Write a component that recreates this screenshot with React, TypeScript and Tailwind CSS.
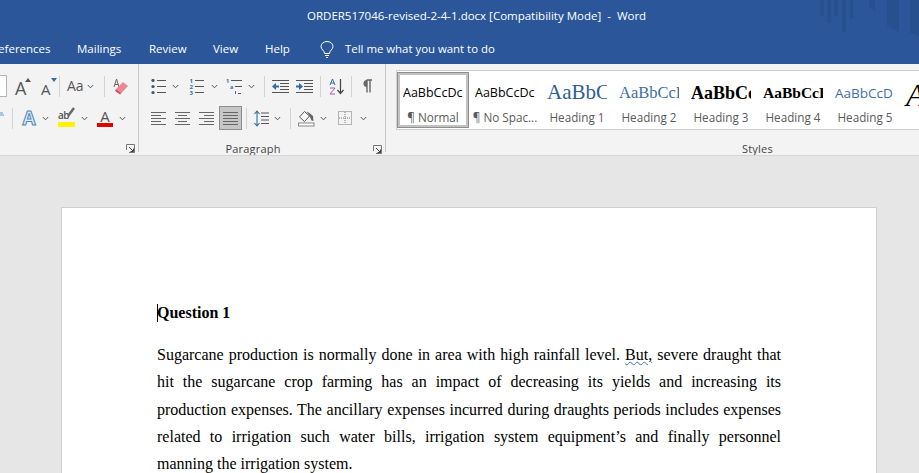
const ui = { fontFamily: '"Open Sans", "Noto Sans", sans-serif' };

const Chevron = ({ className = "" }: { className?: string }) => (
  <svg width="7" height="5" viewBox="0 0 7 5" className={`shrink-0 ${className}`}>
    <path d="M.8 1 3.5 3.8 6.2 1" fill="none" stroke="#555" strokeWidth="1" />
  </svg>
);

const Divider = ({ className = "" }: { className?: string }) => (
  <div className={`w-px h-[21px] bg-[#d2d2d2] shrink-0 ${className}`} />
);

const Launcher = ({ className = "" }: { className?: string }) => (
  <svg width="9" height="9" viewBox="0 0 9 9" className={`shrink-0 ${className}`}>
    <path d="M.5 6V.5H8.500V8.500H3" fill="none" stroke="#777" />
    <path d="M3 3 7.500 7.500M7.500 4.500v3h-3" fill="none" stroke="#444" />
  </svg>
);

const Lines = ({ rows }: { rows: [number, number][] }) => (
  <svg width="16" height="15" viewBox="0 0 16 15" className="shrink-0">
    {rows.map(([x, w], i) => (
      <rect key={i} x={x} y={i * 3 + 1} width={w} height="1" fill="#666" />
    ))}
  </svg>
);

const Bullets = () => (
  <svg width="15" height="15" viewBox="0 0 15 15" className="shrink-0">
    {[1.5, 7.5, 13.5].map((y) => (
      <g key={y}>
        <circle cx="2" cy={y} r="1.6" fill="#44546a" />
        <rect x="6" y={y - 0.5} width="9" height="1" fill="#555" />
      </g>
    ))}
  </svg>
);

const Numbering = () => (
  <svg width="15" height="17" viewBox="0 0 15 17" className="shrink-0">
    {[3, 9, 15].map((y, i) => (
      <g key={y}>
        <text x="0.500" y={y + 1.500} fontSize="6" fontWeight="700" fill="#2f6ea5">{i + 1}</text>
        <rect x="6" y={y - 1} width="9" height="1" fill="#555" />
      </g>
    ))}
  </svg>
);

const Multilevel = () => (
  <svg width="17" height="17" viewBox="0 0 17 17" className="shrink-0">
    <text x="0" y="5" fontSize="5.500" fontWeight="700" fill="#2f6ea5">1</text>
    <rect x="5" y="2" width="11" height="1" fill="#555" />
    <text x="4" y="10.500" fontSize="5.500" fontWeight="700" fill="#2f6ea5">a</text>
    <rect x="9" y="8" width="7" height="1" fill="#555" />
    <rect x="9" y="13" width="1" height="3" fill="#666" />
    <rect x="12" y="15" width="3" height="1" fill="#555" />
  </svg>
);

const Indent = ({ flip }: { flip?: boolean }) => (
  <svg width="17" height="13" viewBox="0 0 17 13" className="shrink-0">
    <rect x="0" y="0" width="17" height="1" fill="#555" />
    <rect x="8" y="3" width="9" height="1" fill="#555" />
    <rect x="8" y="6" width="9" height="1" fill="#555" />
    <rect x="8" y="9" width="9" height="1" fill="#555" />
    <rect x="0" y="12" width="17" height="1" fill="#555" />
    {flip ? (
      <path d="M0 5.500h3V3l4 3.500L3 10V7.500H0z" fill="#2f6ea5" />
    ) : (
      <path d="M7 5.500H4V3L0 6.500 4 10V7.500h3z" fill="#2f6ea5" />
    )}
  </svg>
);

const Sort = () => (
  <svg width="15" height="17" viewBox="0 0 15 17" className="shrink-0">
    <path d="M1 7 3.500 1 6 7M2 5h3" fill="none" stroke="#2f6ea5" strokeWidth="1" />
    <path d="M1 10h5L1 16h5" fill="none" stroke="#a65fa5" strokeWidth="1" />
    <path d="M11.500 1v14M8.500 12l3 3.500 3-3.500" fill="none" stroke="#444" strokeWidth="1.200" />
  </svg>
);

const Pilcrow = () => (
  <svg width="11" height="14" viewBox="0 0 11 14" className="shrink-0">
    <path d="M5 1H10M5 .5v13M8 .5v13" fill="none" stroke="#666" strokeWidth="1.400" />
    <path d="M5 8A3.500 3.500 0 0 1 5 1z" fill="#666" />
  </svg>
);

const LineSpacing = () => (
  <svg width="15" height="17" viewBox="0 0 15 17" className="shrink-0">
    <path d="M3 1v15M.5 4 3 1l2.500 3M.5 13 3 16l2.500-3" fill="none" stroke="#2f6ea5" strokeWidth="1.100" />
    <path d="M7 3h8M7 6.500h8M7 10h8M7 13.500h8" stroke="#555" />
  </svg>
);

const Shading = () => (
  <svg width="17" height="17" viewBox="0 0 17 17" className="shrink-0">
    <path d="M1.500 7 6.500 1.500 11.500 6 6.500 11.500z" fill="#fff" stroke="#555" />
    <path d="M8.500 1.500 11.500 3l3.500 3 .5 5-2-.5-2-4.500z" fill="#666" />
    <rect x=".5" y="13" width="15.500" height="3" fill="#fff" stroke="#888" />
  </svg>
);

const BorderGrid = () => (
  <svg width="14" height="14" viewBox="0 0 14 14" className="shrink-0">
    <rect x=".5" y=".5" width="13" height="13" fill="none" stroke="#777" strokeDasharray="1 1" />
    <path d="M7 1v12M1 7h12" stroke="#777" strokeDasharray="1 1" />
  </svg>
);

const Eraser = () => (
  <svg width="16" height="17" viewBox="0 0 16 17" className="shrink-0">
    <path d="M1 9 3.500 1 6 9M2 6.500h3" fill="none" stroke="#666" />
    <path d="M3 11 10 4l5 4-6.500 7z" fill="#ea8893" />
    <path d="M3 11l5.500 4-1.500 1.500-5-3.500z" fill="#d5505e" />
  </svg>
);

const FontSize = ({ px, up }: { px: number; up?: boolean }) => (
  <div className="relative flex w-[16px] h-[22px] items-end justify-start">
    <span className="text-[#555] leading-none" style={{ fontSize: px }}>A</span>
    <svg width="6" height="4" viewBox="0 0 6 4" className="absolute top-[3px] right-0">
      <path d={up ? "M0 4 3 0l3 4z" : "M0 0h6L3 4z"} fill={up ? "#555" : "#2f6ea5"} />
    </svg>
  </div>
);

const TextEffect = () => (
  <span className="text-[19px] font-bold leading-none text-[#dcebf7] [-webkit-text-stroke:1px_#4d86b8]">A</span>
);

const Highlight = () => (
  <div className="relative flex flex-col items-start w-[17px] shrink-0">
    <span className="text-[10px] leading-[13px] font-semibold text-[#555] tracking-tighter">ab</span>
    <svg width="9" height="11" viewBox="0 0 9 11" className="absolute right-0 -top-[2px]">
      <path d="M8 1 2 9" stroke="#6a6a6a" strokeWidth="2.500" />
    </svg>
    <div className="h-[5px] w-[17px] bg-[#fff200]" />
  </div>
);

const FontColor = () => (
  <div className="flex flex-col items-center w-[16px] shrink-0">
    <span className="text-[15px] leading-[14px] text-[#555]">A</span>
    <div className="h-[4px] w-[16px] bg-[#e00000]" />
  </div>
);

const StyleItem = ({ sample, label, className, selected }: { sample: string; label: string; className: string; selected?: boolean }) => (
  <div
    className={`w-[72px] shrink-0 flex flex-col items-center overflow-hidden ${
      selected ? "my-[1px] h-[56px] border-[3px] border-[#c2c2c2] outline outline-1 -outline-offset-1 outline-[#8f8f8f]" : "h-[58px] pt-[4px]"
    }`}
  >
    <div className={`h-[34px] w-[60px] pt-[2px] flex items-center whitespace-nowrap overflow-hidden ${className}`}>{sample}</div>
    <div className="text-[11.700px] leading-[16px] text-[#5a5a5a] whitespace-nowrap">{label}</div>
  </div>
);

export default function App() {
  return (
    <div className="w-[919px] h-[473px] overflow-hidden bg-[#e6e6e6] flex flex-col" style={ui}>
      <header className="relative h-[64px] bg-[#2b579a] text-white shrink-0">
        <svg width="99" height="36" viewBox="0 0 99 36" className="absolute right-0 top-0">
          <g fill="#27508f">
            <rect x="0" y="0" width="4" height="16" />
            <rect x="7" y="0" width="4" height="23" />
            <rect x="14" y="0" width="4" height="16" />
            <rect x="22" y="0" width="4" height="32" />
            <rect x="30" y="0" width="3" height="19" />
            <path d="M49 0h6v12l-3-4-3-1z" />
            <path d="M67 0h12v32l-12-6z" />
            <path d="M90 0h9v36l-9-3z" />
          </g>
        </svg>
        <div className="h-[32px] pl-[307px] flex items-center text-[11.500px] whitespace-pre">
          ORDER517046-revised-2-4-1.docx [Compatibility Mode]  -  Word
        </div>
        <nav className="h-[32px] pt-[2px] -ml-[9px] flex items-center text-[11.500px] whitespace-nowrap">
          <span className="w-[86px] shrink-0">References</span>
          <span className="w-[72px] shrink-0">Mailings</span>
          <span className="w-[64px] shrink-0">Review</span>
          <span className="w-[52px] shrink-0">View</span>
          <span className="w-[55px] shrink-0">Help</span>
          <svg width="14" height="17" viewBox="0 0 14 17" className="shrink-0 mr-[11px]">
            <path d="M4.500 12.500C4.500 9.500 1 8.500 1 5.500a6 5 0 0 1 12 0c0 3-3.500 4-3.500 7zM5 14.500h4M6 16.500h2" fill="none" stroke="#fff" />
          </svg>
          <span className="text-[11.400px]">Tell me what you want to do</span>
        </nav>
      </header>

      <section className="h-[92px] bg-[#f3f3f3] border-b border-[#d5d5d5] flex shrink-0 overflow-hidden">
        <div className="w-[139px] shrink-0 border-r border-[#c8c8c8] h-[88px] flex flex-col">
          <div className="h-[22px] mt-[11px] flex items-center shrink-0">
            <div className="w-[7px] h-[22px] bg-white border border-[#b5b5b5] border-l-0 shrink-0" />
            <div className="ml-[8px]"><FontSize px={18} up /></div>
            <div className="ml-[10px]"><FontSize px={15} /></div>
            <Divider className="ml-[2px]" />
            <span className="ml-[7px] w-[16px] shrink-0 text-[14px] leading-none text-[#555]">Aa</span>
            <Chevron className="ml-[4px]" />
            <Divider className="ml-[10px]" />
            <div className="ml-[8px]"><Eraser /></div>
          </div>
          <div className="h-[22px] mt-[10px] flex items-center shrink-0">
            <svg width="4" height="4" viewBox="0 0 4 4" className="shrink-0 mb-[8px]">
              <path d="M0 1h3M0 3h4" stroke="#5b9bd5" />
            </svg>
            <Divider className="ml-[8px]" />
            <div className="ml-[8px] w-[16px] flex justify-center"><TextEffect /></div>
            <Chevron className="ml-[5px]" />
            <div className="ml-[9px]"><Highlight /></div>
            <Chevron className="ml-[6px]" />
            <div className="ml-[9px]"><FontColor /></div>
            <Chevron className="ml-[6px]" />
          </div>
          <div className="flex justify-end pr-[3px] mt-[15px] shrink-0"><Launcher /></div>
        </div>

        <div className="w-[247px] shrink-0 border-r border-[#c8c8c8] h-[88px] flex flex-col">
          <div className="h-[22px] mt-[11px] pl-[12px] flex items-center shrink-0">
            <Bullets />
            <Chevron className="ml-[6px]" />
            <div className="ml-[10px]"><Numbering /></div>
            <Chevron className="ml-[7px]" />
            <div className="ml-[8px]"><Multilevel /></div>
            <Chevron className="ml-[5px]" />
            <Divider className="ml-[9px]" />
            <div className="ml-[7px]"><Indent /></div>
            <div className="ml-[7px]"><Indent flip /></div>
            <Divider className="ml-[7px]" />
            <div className="ml-[8px]"><Sort /></div>
            <Divider className="ml-[7px]" />
            <div className="ml-[10px]"><Pilcrow /></div>
          </div>
          <div className="h-[24px] mt-[9px] pl-[12px] flex items-center shrink-0">
            <Lines rows={[[0, 15], [0, 10], [0, 15], [0, 10], [0, 15]]} />
            <div className="ml-[8px]"><Lines rows={[[0, 15], [3, 9], [0, 15], [3, 9], [0, 15]]} /></div>
            <div className="ml-[8px]"><Lines rows={[[0, 15], [5, 10], [0, 15], [5, 10], [0, 15]]} /></div>
            <div className="ml-[4px] w-[23px] h-[24px] bg-[#c6c6c6] border border-[#8e8e8e] flex items-center justify-center shrink-0">
              <Lines rows={[[0, 15], [0, 15], [0, 15], [0, 15], [0, 15]]} />
            </div>
            <Divider className="ml-[4px]" />
            <div className="ml-[7px]"><LineSpacing /></div>
            <Chevron className="ml-[5px]" />
            <Divider className="ml-[9px]" />
            <div className="ml-[7px]"><Shading /></div>
            <Chevron className="ml-[5px]" />
            <div className="ml-[11px]"><BorderGrid /></div>
            <Chevron className="ml-[8px]" />
          </div>
          <div className="relative mt-[11px] h-[16px] shrink-0 pr-[18px] text-center text-[11px] leading-[16px] text-[#444] tracking-[0.2px]">
            Paragraph
            <Launcher className="absolute right-[3px] top-[4px]" />
          </div>
        </div>

        <div className="flex-1 min-w-0 flex flex-col">
          <div className="h-[60px] mt-[6px] ml-[10px] bg-white border border-[#d0d0d0] border-r-0 flex overflow-hidden shrink-0">
            <StyleItem selected sample="AaBbCcDc" label="¶ Normal" className="text-[12.500px] text-black" />
            <StyleItem sample="AaBbCcDc" label="¶ No Spac..." className="text-[12.500px] text-black" />
            <StyleItem sample="AaBbC" label="Heading 1" className="text-[21px] text-[#2e5f94] font-['Liberation_Serif',serif]" />
            <StyleItem sample="AaBbCcD" label="Heading 2" className="text-[16.500px] text-[#3d6fa5] font-['Liberation_Serif',serif]" />
            <StyleItem sample="AaBbCc" label="Heading 3" className="text-[18px] font-bold text-black font-['Liberation_Serif',serif]" />
            <StyleItem sample="AaBbCcD" label="Heading 4" className="text-[15.500px] font-bold text-black font-['Liberation_Serif',serif]" />
            <StyleItem sample="AaBbCcD" label="Heading 5" className="text-[13.500px] text-[#3d6fa5]" />
            <div className="w-[20px] pl-[5px] text-[32px] italic leading-[48px] font-['Liberation_Serif',serif] text-black">A</div>
          </div>
          <div className="mt-[11px] h-[16px] shrink-0 pl-[356px] text-[11px] leading-[16px] text-[#444] tracking-[0.2px]">Styles</div>
        </div>
      </section>

      <main className="flex-1 min-h-0 pl-[61px] pt-[51px] overflow-hidden">
        <article className="w-[816px] h-[400px] bg-white border border-[#cfcfcf] pl-[95px] pr-[95px] pt-[93px] text-[16px] text-black font-['Liberation_Serif',serif]">
          <h1 className="font-bold leading-[24px]">
            <span className="inline-block w-px -mr-px h-[18px] bg-black align-[-4px]" />
            Question 1
          </h1>
          <p className="mt-[16px] leading-[27.3px] text-justify">
            Sugarcane production is normally done in area with high rainfall level.{" "}
            <span className="underline decoration-wavy decoration-[#3b6fc4] decoration-1">But,</span> severe draught that
            hit the sugarcane crop farming has an impact of decreasing its yields and increasing its production
            expenses. The ancillary expenses incurred during draughts periods includes expenses related to irrigation
            such water bills, irrigation system equipment’s and finally personnel manning the irrigation system.
          </p>
        </article>
      </main>
    </div>
  );
}
